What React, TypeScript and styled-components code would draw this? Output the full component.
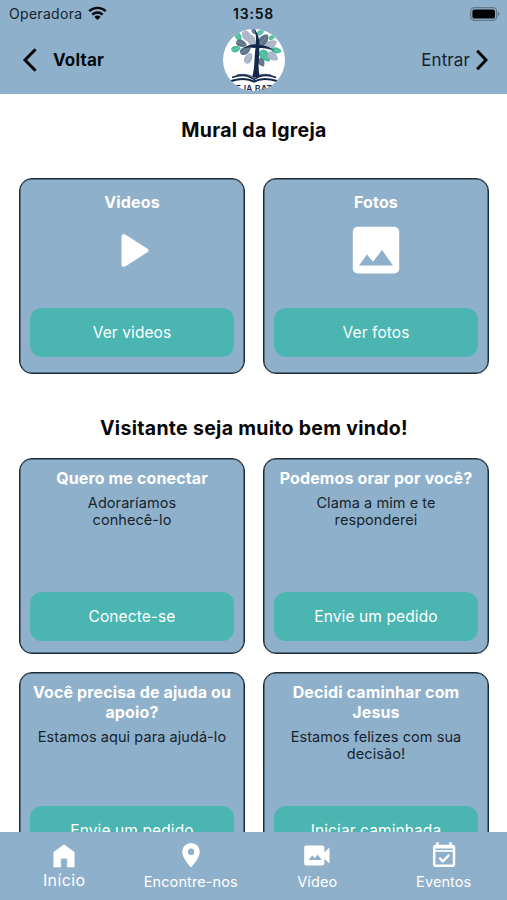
import React from "react";
import styled, { createGlobalStyle } from "styled-components";

const BLUE = "#8fb0ca";
const TEAL = "#4ab5b1";

const GlobalStyle = createGlobalStyle`
  * { box-sizing: border-box; }
  body { margin: 0; background: #fff; font-family: Inter, "Liberation Sans", sans-serif; }
`;

const Screen = styled.div`
  display: flex;
  flex-direction: column;
  width: 507px;
  height: 900px;
  overflow: hidden;
  background: #fff;
`;

const StatusBar = styled.div`
  flex: none;
  display: grid;
  grid-template-columns: 1fr auto 1fr;
  align-items: center;
  height: 27px;
  padding: 0 7px 0 9px;
  background: ${BLUE};
  color: #14222e;
  font-size: 14px;
`;

const Carrier = styled.div`
  display: flex;
  align-items: center;
  gap: 6px;
  letter-spacing: 0.3px;
`;

const Clock = styled.div`
  margin-left: -2px;
  font-size: 14px;
  font-weight: 600;
  letter-spacing: 0.75px;
  color: #0a0f14;
`;

const Battery = styled.svg`
  justify-self: end;
  display: block;
`;

const Header = styled.header`
  flex: none;
  display: grid;
  grid-template-columns: 1fr 62px 1fr;
  align-items: center;
  height: 67px;
  padding: 0 18px 2px 22px;
  background: ${BLUE};
`;

const Seal = styled.svg`
  display: block;
  margin-left: -2px;
`;

const HeaderLink = styled.a<{ $end?: boolean }>`
  display: flex;
  align-items: center;
  justify-content: ${(p) => (p.$end ? "flex-end" : "flex-start")};
  gap: ${(p) => (p.$end ? "5px" : "15px")};
  font-size: 17px;
  font-weight: ${(p) => (p.$end ? 400 : 700)};
  letter-spacing: ${(p) => (p.$end ? "0.1px" : "0.2px")};
  color: ${(p) => (p.$end ? "#14222e" : "#06090c")};
`;

const Content = styled.main`
  flex: 1;
  min-height: 0;
  overflow: hidden;
  padding: 0 18px 0 19px;
`;

const SectionTitle = styled.h2<{ $height: number; $offset: number }>`
  height: ${(p) => p.$height}px;
  margin: 0;
  padding-top: ${(p) => p.$offset}px;
  font-size: 19.5px;
  line-height: 24px;
  font-weight: 700;
  letter-spacing: 0.3px;
  text-align: center;
  white-space: nowrap;
  color: #080808;
`;

const CardGrid = styled.div`
  display: grid;
  grid-template-columns: 226px 226px;
  grid-auto-rows: 196px;
  gap: 17.5px 18px;
`;

const Card = styled.article`
  display: flex;
  flex-direction: column;
  align-items: center;
  padding: 9px 9px 12px;
  border: 1px solid #1c2b36;
  border-radius: 13px;
  box-shadow: inset 0 0 0 0.5px #1c2b36;
  background: ${BLUE};
  text-align: center;
`;

const MediaCard = styled(Card)`
  padding: 13px 9px 16px;
`;

const CardTitle = styled.h3`
  margin: 0;
  font-size: 16px;
  line-height: 20px;
  font-weight: 700;
  letter-spacing: 0.13px;
  color: #fff;
`;

const CardText = styled.p`
  width: 196px;
  margin: 6px 0 0;
  font-size: 14.5px;
  line-height: 17px;
  letter-spacing: 0.07px;
  color: #15242f;
  white-space: pre-line;
`;

const CardButton = styled.button`
  flex: none;
  width: 204px;
  height: 49px;
  margin-top: auto;
  padding: 0;
  border: 0;
  border-radius: 12px;
  background: ${TEAL};
  color: #fff;
  font: 400 15.5px Inter, "Liberation Sans", sans-serif;
  letter-spacing: 0.1px;
`;

const CardIcon = styled.svg`
  flex: none;
  display: block;
  margin-top: 8px;
`;

const TabBar = styled.nav`
  flex: none;
  display: grid;
  grid-template-columns: repeat(4, 1fr);
  height: 68px;
  padding-left: 1px;
  background: ${BLUE};
`;

const Tab = styled.a<{ $active?: boolean }>`
  display: flex;
  flex-direction: column;
  align-items: center;
  padding-top: 8px;
  gap: ${(p) => (p.$active ? "0" : "3px")};
  color: #fff;
  font-size: ${(p) => (p.$active ? 16 : 14.5)}px;
  line-height: ${(p) => (p.$active ? 20 : 18)}px;
  letter-spacing: ${(p) => (p.$active ? 0.4 : 0.1)}px;
`;

const WifiIcon = () => (
  <svg width="19" height="15" viewBox="0 0 19 15">
    <g fill="none" stroke="#05080b" strokeWidth="2.4">
      <path d="M1.2 5.2a12 12 0 0 1 16.6 0" />
      <path d="M4.3 8.6a7.5 7.5 0 0 1 10.4 0" />
    </g>
    <path d="M9.5 14 6.4 10.9a4.4 4.4 0 0 1 6.2 0Z" fill="#05080b" />
  </svg>
);

const BatteryIcon = () => (
  <Battery width="30" height="14" viewBox="0 0 30 14">
    <rect x="0.7" y="0.7" width="26" height="12.6" rx="3.8" fill="none" stroke="#63798a" strokeWidth="1.3" />
    <rect x="2.4" y="2.4" width="22.6" height="9.2" rx="2.2" fill="#020304" />
    <path d="M28 4.8c1.8.6 1.8 3.8 0 4.4Z" fill="#63798a" />
  </Battery>
);

const BackIcon = () => (
  <svg width="16" height="24" viewBox="0 0 16 24" fill="none" stroke="#05080b" strokeWidth="3">
    <path d="M13.6 1.3 3 12l10.6 10.7" />
  </svg>
);

const ForwardIcon = () => (
  <svg width="14" height="22" viewBox="0 0 14 22" fill="none" stroke="#05080b" strokeWidth="3">
    <path d="M2.2 1.8 11 11l-8.8 9.2" />
  </svg>
);

type Leaf = [number, number, number, number, number, string];
const MINT = "#4dbd9f";
const SLATE = "#5c7286";
const MIST = "#aab5c8";
const LEAVES: Leaf[] = [
  [15.5, 8, 4.6, 3.2, 60, MINT],
  [24, 7.5, 6.5, 4.4, 58, MIST],
  [18.5, 14.5, 5.6, 3.8, 18, SLATE],
  [13, 20, 4.8, 3.4, -12, MINT],
  [29, 12.5, 7, 4.2, 65, MIST],
  [22.5, 21.5, 5.8, 4, -28, SLATE],
  [25.5, 29, 6, 4, -62, MIST],
  [40.5, 11, 7, 4.8, -52, SLATE],
  [37.5, 3.5, 4, 2.6, -30, MINT],
  [31, 2.5, 3.2, 2.2, 60, SLATE],
  [48, 15.5, 6.6, 4.2, -30, MIST],
  [49, 8.5, 3.4, 2.4, -25, MINT],
  [53.5, 21.5, 5.2, 3.2, 8, MINT],
  [42, 27, 7, 5, 48, MINT],
  [50, 27.5, 6, 4, 36, MIST],
  [38.5, 33.5, 4.6, 3.2, 60, SLATE],
];

const Logo = () => (
  <Seal width="62" height="62" viewBox="0 0 62 62">
    <defs>
      <clipPath id="seal">
        <circle cx="31" cy="31" r="31" />
      </clipPath>
    </defs>
    <g clipPath="url(#seal)">
      <rect width="62" height="62" fill="#fff" />
      {LEAVES.map(([x, y, r, w, angle, fill], i) => (
        <g key={i} transform={`translate(${x} ${y}) rotate(${angle})`}>
          <path d={`M${-r} 0C${-r} ${-w * 1.25} ${r * 0.5} ${-w * 1.25} ${r} 0C${r * 0.5} ${w * 1.25} ${-r} ${w * 1.25} ${-r} 0Z`} fill={fill} />
          <path d={`M${-r} 0H${r * 0.6}`} stroke="#fff" strokeOpacity="0.35" strokeWidth="0.5" />
        </g>
      ))}
      <g fill="#14284b">
        <path d="M31.5 0c3.5 4.5 5.1 9.5 5 16.5l-.8 18c-.2 5 .2 9.5 1.3 13.5h-7.8c1.5-5 1.9-10 2.3-17 .8-14 2.9-21 0-31Z" />
        <path d="M19.5 19.5c6-4.2 12-4.700 17-3.8 6 .9 11.5 2.6 15.5 6.3-5-2.2-10-3.1-15.5-3-6 .1-11-1.4-17 .5Z" />
      </g>
      <g fill="none" stroke="#14284b">
        <path d="M9 48.5c8-3.2 16-2.8 22 2 6-4.8 14-5.2 22-2" strokeWidth="1.6" />
        <path d="M8 52c9-2.8 18-2.4 23 .6 5-3 14-3.4 23-.6" strokeWidth="2" />
        <path d="M14 46c7-1.5 13-.6 17 3 4-3.6 10-4.5 17-3" strokeWidth="0.8" />
      </g>
      <text x="31" y="62.5" textAnchor="middle" fontFamily="Inter, sans-serif" fontSize="9" fontWeight="600" fill="#14284b">
        EJA BAT
      </text>
    </g>
  </Seal>
);

const PlayIcon = () => (
  <CardIcon width="60" height="60" viewBox="0 0 60 60" fill="#fff">
    <path d="M19.5 16.5c0-2.2 2-3.1 3.7-2l22.3 14.3c1.4.9 1.4 2.5 0 3.4L23.2 46.4c-1.7 1.1-3.7.2-3.7-2Z" />
  </CardIcon>
);

const PhotoIcon = () => (
  <CardIcon width="60" height="60" viewBox="0 0 60 60">
    <rect x="6.8" y="6.8" width="46.4" height="46.7" rx="5" fill="#fff" />
    <path d="m13 45.5 8-11 6 7.2 9-11.7 11 15.5Z" fill={BLUE} />
  </CardIcon>
);

const HomeIcon = () => (
  <svg width="30" height="30" viewBox="0 0 30 30">
    <path d="M15 4.8 25.2 12V27H18.3V18.3H11.7V27H4.8V12Z" fill="#fff" stroke="#fff" strokeWidth="0.6" strokeLinejoin="round" />
  </svg>
);

const PinIcon = () => (
  <svg width="30" height="30" viewBox="0 0 30 30">
    <path
      fillRule="evenodd"
      d="M15 3a8.8 8.8 0 0 0-8.8 8.8c0 6.5 8.8 15.7 8.8 15.7s8.8-9.2 8.8-15.7A8.8 8.8 0 0 0 15 3Zm0 12a3.2 3.2 0 1 1 0-6.4 3.2 3.2 0 0 1 0 6.4Z"
      fill="#fff"
    />
  </svg>
);

const VideoIcon = () => (
  <svg width="30" height="30" viewBox="0 0 30 30">
    <path d="M4 5.500h16.500a1.800 1.800 0 0 1 1.800 1.800v5l5.200-4.800v16l-5.200-4.800v5a1.800 1.800 0 0 1-1.800 1.800H4.200a2 2 0 0 1-2-2v-16a2 2 0 0 1 1.800-2Z" fill="#fff" />
    <path d="m6.5 20 3.8-4.6 2.4 2.9 2.9-3.9 4.1 5.6Z" fill={BLUE} />
  </svg>
);

const EventIcon = () => (
  <svg width="30" height="30" viewBox="0 0 30 30" fill="none" stroke="#fff">
    <path d="M8.5 2.2V6M21.5 2.2V6" strokeWidth="2.6" />
    <rect x="5.2" y="6" width="19.8" height="19.7" rx="1.6" strokeWidth="2.5" />
    <path d="M5 7h20" strokeWidth="3" />
    <path d="M5 10.9h20" strokeWidth="1.7" />
    <path d="m10.3 17.9 3.5 3.5 6.5-6.5" strokeWidth="2.2" />
  </svg>
);

const media = [
  { title: "Videos", icon: <PlayIcon />, action: "Ver videos" },
  { title: "Fotos", icon: <PhotoIcon />, action: "Ver fotos" },
];

const invitations = [
  { title: "Quero me conectar", text: "Adoraríamos\nconhecê-lo", action: "Conecte-se" },
  { title: "Podemos orar por você?", text: "Clama a mim e te\nresponderei", action: "Envie um pedido" },
  { title: "Você precisa de ajuda ou apoio?", text: "Estamos aqui para ajudá-lo", action: "Envie um pedido" },
  { title: "Decidi caminhar com Jesus", text: "Estamos felizes com sua\ndecisão!", action: "Iniciar caminhada" },
];

const tabs = [
  { label: "Início", icon: <HomeIcon />, active: true },
  { label: "Encontre-nos", icon: <PinIcon /> },
  { label: "Vídeo", icon: <VideoIcon /> },
  { label: "Eventos", icon: <EventIcon /> },
];

export default function App() {
  return (
    <>
      <GlobalStyle />
      <Screen>
        <StatusBar>
          <Carrier>
            Operadora
            <WifiIcon />
          </Carrier>
          <Clock>13:58</Clock>
          <BatteryIcon />
        </StatusBar>
        <Header>
          <HeaderLink>
            <BackIcon />
            Voltar
          </HeaderLink>
          <Logo />
          <HeaderLink $end>
            Entrar
            <ForwardIcon />
          </HeaderLink>
        </Header>
        <Content>
          <SectionTitle $height={84} $offset={24}>
            Mural da Igreja
          </SectionTitle>
          <CardGrid>
            {media.map((m) => (
              <MediaCard key={m.title}>
                <CardTitle>{m.title}</CardTitle>
                {m.icon}
                <CardButton>{m.action}</CardButton>
              </MediaCard>
            ))}
          </CardGrid>
          <SectionTitle $height={84} $offset={42}>
            Visitante seja muito bem vindo!
          </SectionTitle>
          <CardGrid>
            {invitations.map((c) => (
              <Card key={c.title}>
                <CardTitle>{c.title}</CardTitle>
                <CardText>{c.text}</CardText>
                <CardButton>{c.action}</CardButton>
              </Card>
            ))}
          </CardGrid>
        </Content>
        <TabBar>
          {tabs.map((t) => (
            <Tab key={t.label} $active={t.active}>
              {t.icon}
              {t.label}
            </Tab>
          ))}
        </TabBar>
      </Screen>
    </>
  );
}
